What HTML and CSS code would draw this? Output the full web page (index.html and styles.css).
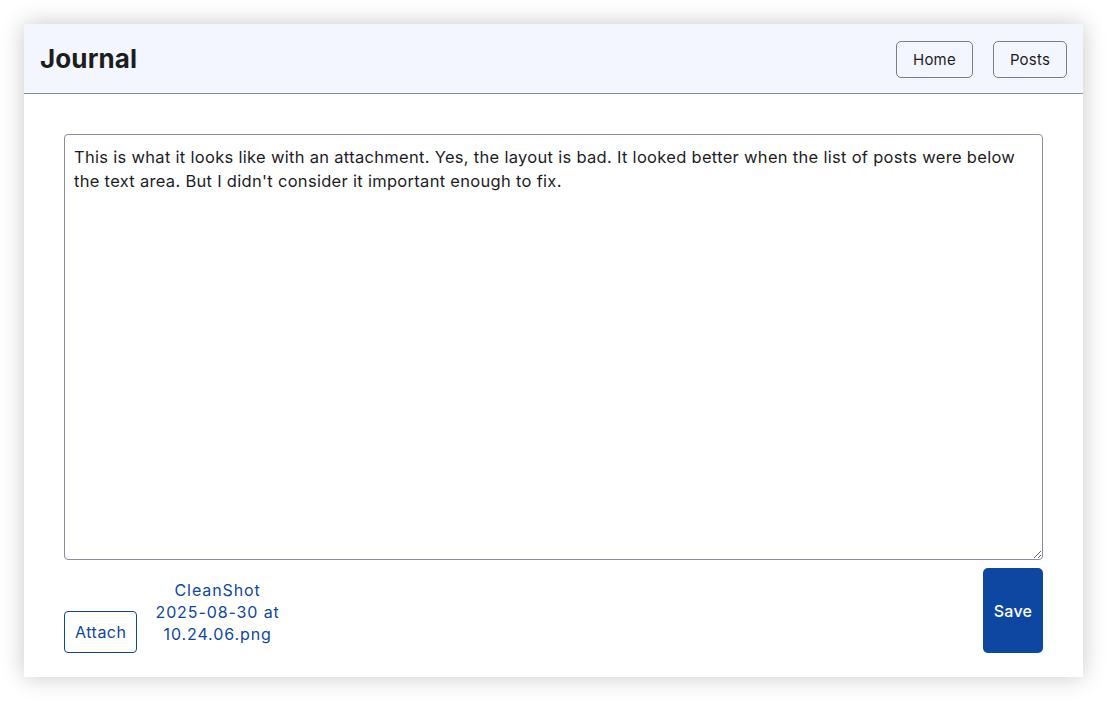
FILE: index.html
```html
<!DOCTYPE html>
<html>
<head>
<meta charset="utf-8">
<link rel="stylesheet" href="styles.css">
</head>
<body>
<div class="window">
  <header class="topbar">
    <h1 class="title">Journal</h1>
    <nav class="nav">
      <button class="navbtn">Home</button>
      <button class="navbtn">Posts</button>
    </nav>
  </header>
  <main class="content">
    <textarea class="editor">This is what it looks like with an attachment. Yes, the layout is bad. It looked better when the list of posts were below the text area. But I didn't consider it important enough to fix.</textarea>
    <div class="actions">
      <div class="left">
        <button class="attach">Attach</button>
        <a class="file" href="#">CleanShot<br>2025-08-30 at<br>10.24.06.png</a>
      </div>
      <button class="save">Save</button>
    </div>
  </main>
</div>
</body>
</html>
```
FILE: styles.css
```css
html, body {
  margin: 0;
  padding: 0;
  background: #ffffff;
}
body {
  padding: 24px;
  font-family: Inter, "Noto Sans", sans-serif;
  color: #1f1f1f;
}
.window {
  width: 1059px;
  height: 653px;
  background: #fff;
  box-shadow: 0 0 22px rgba(0, 0, 0, 0.22);
  display: flex;
  flex-direction: column;
}
.topbar {
  height: 69px;
  background: #f3f6fe;
  border-bottom: 1px solid #8c8ca0;
  display: flex;
  align-items: center;
  justify-content: space-between;
  padding: 0 16px;
}
.title {
  margin: 0;
  font-size: 26px;
  font-weight: 700;
  color: #1d1d1f;
  letter-spacing: 0.1px;
}
.nav {
  display: flex;
  gap: 20px;
  padding-top: 2px;
}
.navbtn {
  height: 37px;
  padding: 0 16px;
  background: transparent;
  border: 1px solid #7c7c90;
  border-radius: 5px;
  font-family: inherit;
  font-size: 15px;
  letter-spacing: 0.2px;
  color: #1d1d1f;
}
.content {
  flex: 1;
  padding: 40px 40px 24px 40px;
  display: flex;
  flex-direction: column;
}
.editor {
  height: 426px;
  box-sizing: border-box;
  width: 100%;
  margin: 0;
  padding: 10px 9px;
  border: 1px solid #8c8ca0;
  border-radius: 4px;
  font-family: inherit;
  font-size: 16.5px;
  line-height: 24px;
  letter-spacing: 0.3px;
  color: #1d1d1f;
  resize: vertical;
}
.actions {
  margin-top: 8px;
  display: flex;
  justify-content: space-between;
  align-items: flex-end;
}
.left {
  display: flex;
  align-items: flex-end;
  gap: 18px;
}
.attach {
  height: 42px;
  padding: 0 10px;
  background: #fff;
  border: 1px solid #0d47a1;
  border-radius: 4px;
  font-family: inherit;
  font-size: 16px;
  letter-spacing: 0.5px;
  color: #0d47a1;
}
.file {
  display: block;
  text-align: center;
  font-size: 16px;
  line-height: 22px;
  letter-spacing: 0.9px;
  color: #0d47a1;
  text-decoration: none;
  padding-bottom: 8px;
}
.save {
  width: 60px;
  height: 85px;
  background: #0d47a1;
  color: #fff;
  border: none;
  border-radius: 5px;
  font-family: inherit;
  font-size: 16px;
  font-weight: 500;
  letter-spacing: 0.3px;
}
```
